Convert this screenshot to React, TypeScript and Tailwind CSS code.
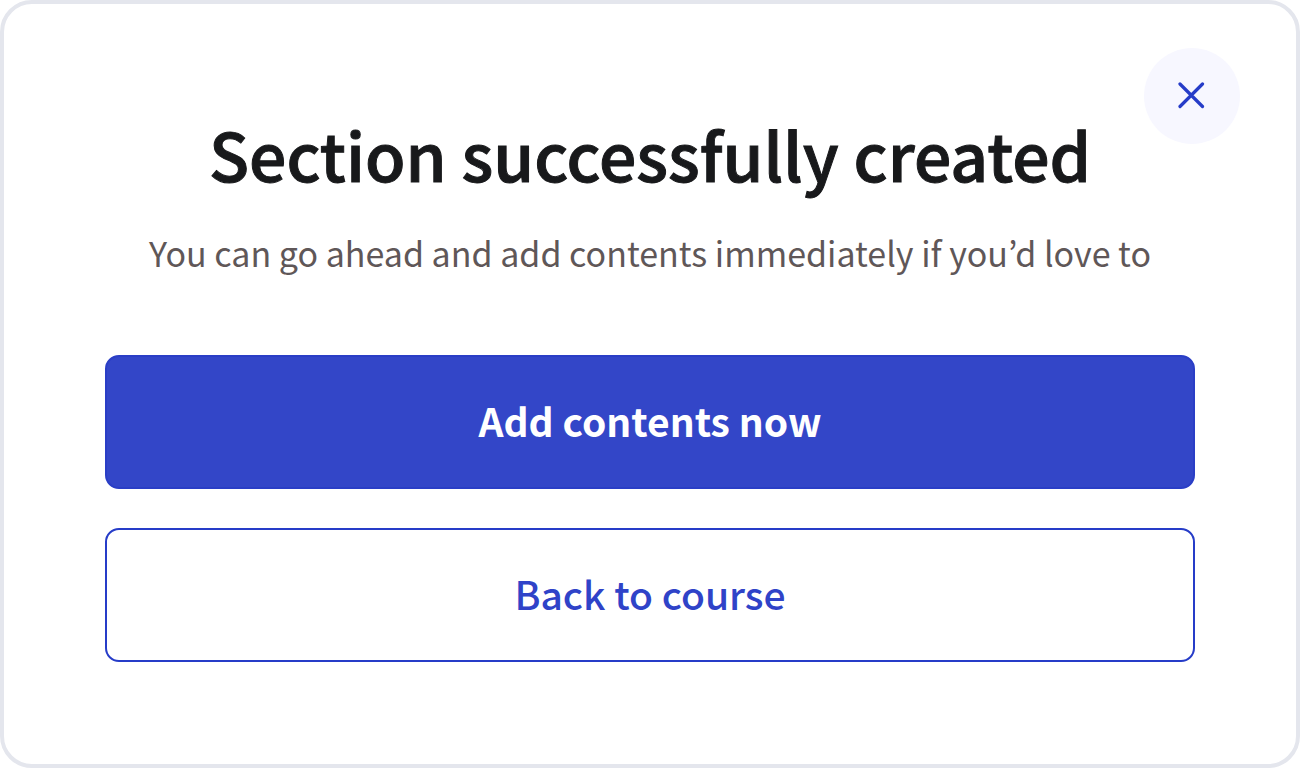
import { useState } from "react";

export default function App() {
  const [open, setOpen] = useState(true);
  if (!open) return null;

  return (
    <main className="min-h-screen bg-white font-['Noto_Sans_CJK_KR','Noto_Sans',sans-serif]">
      <section
        role="dialog"
        aria-labelledby="dialog-title"
        aria-describedby="dialog-text"
        className="relative flex min-h-screen flex-col rounded-[32px] border-4 border-[#e4e6ed] bg-white px-[101px] pt-[101px] pb-[101px]"
      >
        <button
          type="button"
          aria-label="Close"
          onClick={() => setOpen(false)}
          className="absolute top-11 right-14 flex size-24 items-center justify-center rounded-full bg-[#f7f7ff]"
        >
          <svg viewBox="0 0 28 28" className="size-7" fill="none" stroke="#263cc8" strokeWidth="3.2" strokeLinecap="round" aria-hidden="true">
            <path d="M2 2l22.500 22.500M24.500 2l-22.500 22.500" />
          </svg>
        </button>
        <h1 id="dialog-title" className="text-center text-[66px] leading-[96px] font-medium whitespace-nowrap text-[#18191b] [-webkit-text-stroke:1px_#18191b]">
          Section successfully created
        </h1>
        <p id="dialog-text" className="mt-6 text-center text-[34px] leading-[56px] whitespace-nowrap text-[#5f5758]">
          You can go ahead and add contents immediately if you’d love to
        </p>
        <div className="mt-[74px] flex flex-col gap-[39px]">
          <button type="button" className="h-[134px] rounded-[14px] border-2 border-[#2a3ec6] bg-[#3346c8] pb-1 text-[39px] font-bold text-white">
            Add contents now
          </button>
          <button type="button" className="h-[134px] rounded-[14px] border-2 border-[#263cc8] bg-white pb-1 text-[39px] font-medium text-[#2f43c8]">
            Back to course
          </button>
        </div>
      </section>
    </main>
  );
}
